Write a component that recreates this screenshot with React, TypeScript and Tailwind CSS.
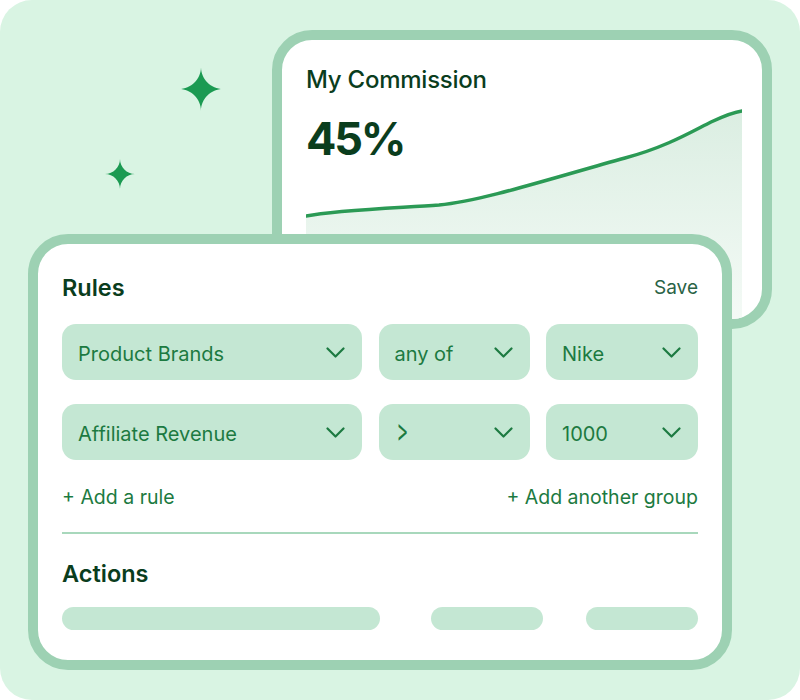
import type { ReactNode } from 'react'

const FONT = { fontFamily: 'Inter, "Noto Sans", sans-serif' }

function Sparkle({ size }: { size: number }) {
  return (
    <svg width={size} height={size} viewBox="0 0 24 24">
      <path
        d="M12 0C12 6.6 17.4 12 24 12C17.4 12 12 17.4 12 24C12 17.4 6.6 12 0 12C6.6 12 12 6.6 12 0Z"
        fill="#1b9a52"
      />
    </svg>
  )
}

function Chevron() {
  return (
    <svg width="19" height="11" viewBox="0 0 19 11" fill="none">
      <path d="M1.5 1.5L9.5 9.5L17.5 1.5" stroke="#1c7a41" strokeWidth="2.2" strokeLinecap="round" strokeLinejoin="round" />
    </svg>
  )
}

function Select({ label, width }: { label: ReactNode; width: string }) {
  return (
    <div className={`flex h-[56px] ${width} items-center justify-between rounded-[14px] bg-[#c4e7d3] pl-4 pr-[17px]`}>
      <span className="pt-[3px] text-[20px] leading-6 text-[#1c7a41]">{label}</span>
      <Chevron />
    </div>
  )
}

function Chart() {
  const line = 'M0 116C30 110 90 108 133 105C175 101 240 80 319 58C360 47 385 32 405 22C418 16 428 12 436 11'
  return (
    <svg className="absolute bottom-0 left-6" width="436" height="219" viewBox="0 0 436 219" fill="none">
      <defs>
        <linearGradient id="area" x1="0" y1="0" x2="0" y2="1">
          <stop offset="0" stopColor="#dbeee2" />
          <stop offset="1" stopColor="#f4faf6" />
        </linearGradient>
      </defs>
      <path d={`${line}V219H0Z`} fill="url(#area)" />
      <path d={line} stroke="#2b9a55" strokeWidth="3.5" strokeLinecap="round" />
    </svg>
  )
}

export default function App() {
  return (
    <div style={FONT} className="relative h-[700px] w-[800px] overflow-hidden rounded-[32px] bg-[#d9f4e3] pt-[30px]">
      <div className="absolute left-[179px] top-[67px]">
        <Sparkle size={44} />
      </div>
      <div className="absolute left-[105px] top-[159px]">
        <Sparkle size={30} />
      </div>

      {/* commission card */}
      <div className="relative ml-[272px] h-[299px] w-[500px] overflow-hidden rounded-[40px] border-[10px] border-[#9dd1b3] bg-white px-6 pt-[26px]">
        <Chart />
        <p className="relative text-[24px] font-medium leading-7 tracking-[-0.01em] text-[#0a3d1d]">My Commission</p>
        <p className="relative mt-[20px] text-[45px] font-bold leading-[50px] tracking-[-0.05em] text-[#0a3d1d]">45%</p>
      </div>

      {/* rules card */}
      <div className="relative z-10 -mt-[95px] ml-[28px] h-[436px] w-[704px] rounded-[40px] border-[10px] border-[#9dd1b3] bg-white px-6 pt-[30px]">
        <div className="flex items-center justify-between">
          <h2 className="text-[23.5px] font-semibold leading-7 text-[#0a3d1d]">Rules</h2>
          <span className="text-[19px] leading-6 text-[#2a6346]">Save</span>
        </div>

        <div className="mt-[22px] flex justify-between">
          <Select label="Product Brands" width="w-[300px]" />
          <Select label="any of" width="w-[151px]" />
          <Select label="Nike" width="w-[152px]" />
        </div>
        <div className="mt-6 flex justify-between">
          <Select label="Affiliate Revenue" width="w-[300px]" />
          <Select
            label={
              <span className="inline-block -translate-y-[3px] scale-x-[0.8] scale-y-[1.45] text-[22px] font-normal">
                &gt;
              </span>
            }
            width="w-[151px]"
          />
          <Select label="1000" width="w-[152px]" />
        </div>

        <div className="mt-[25px] flex items-center justify-between text-[19.5px] leading-6 text-[#1c7a41]">
          <span>+ Add a rule</span>
          <span>+ Add another group</span>
        </div>

        <div className="mt-[23px] h-[2px] bg-[#a8d8bc]" />

        <h2 className="mt-[26px] text-[23.5px] font-semibold leading-7 text-[#0a3d1d]">Actions</h2>
        <div className="mt-[19px] flex">
          <div className="h-[23px] w-[318px] rounded-full bg-[#c4e7d3]" />
          <div className="ml-[51px] h-[23px] w-[112px] rounded-full bg-[#c4e7d3]" />
          <div className="ml-auto h-[23px] w-[112px] rounded-full bg-[#c4e7d3]" />
        </div>
      </div>
    </div>
  )
}
